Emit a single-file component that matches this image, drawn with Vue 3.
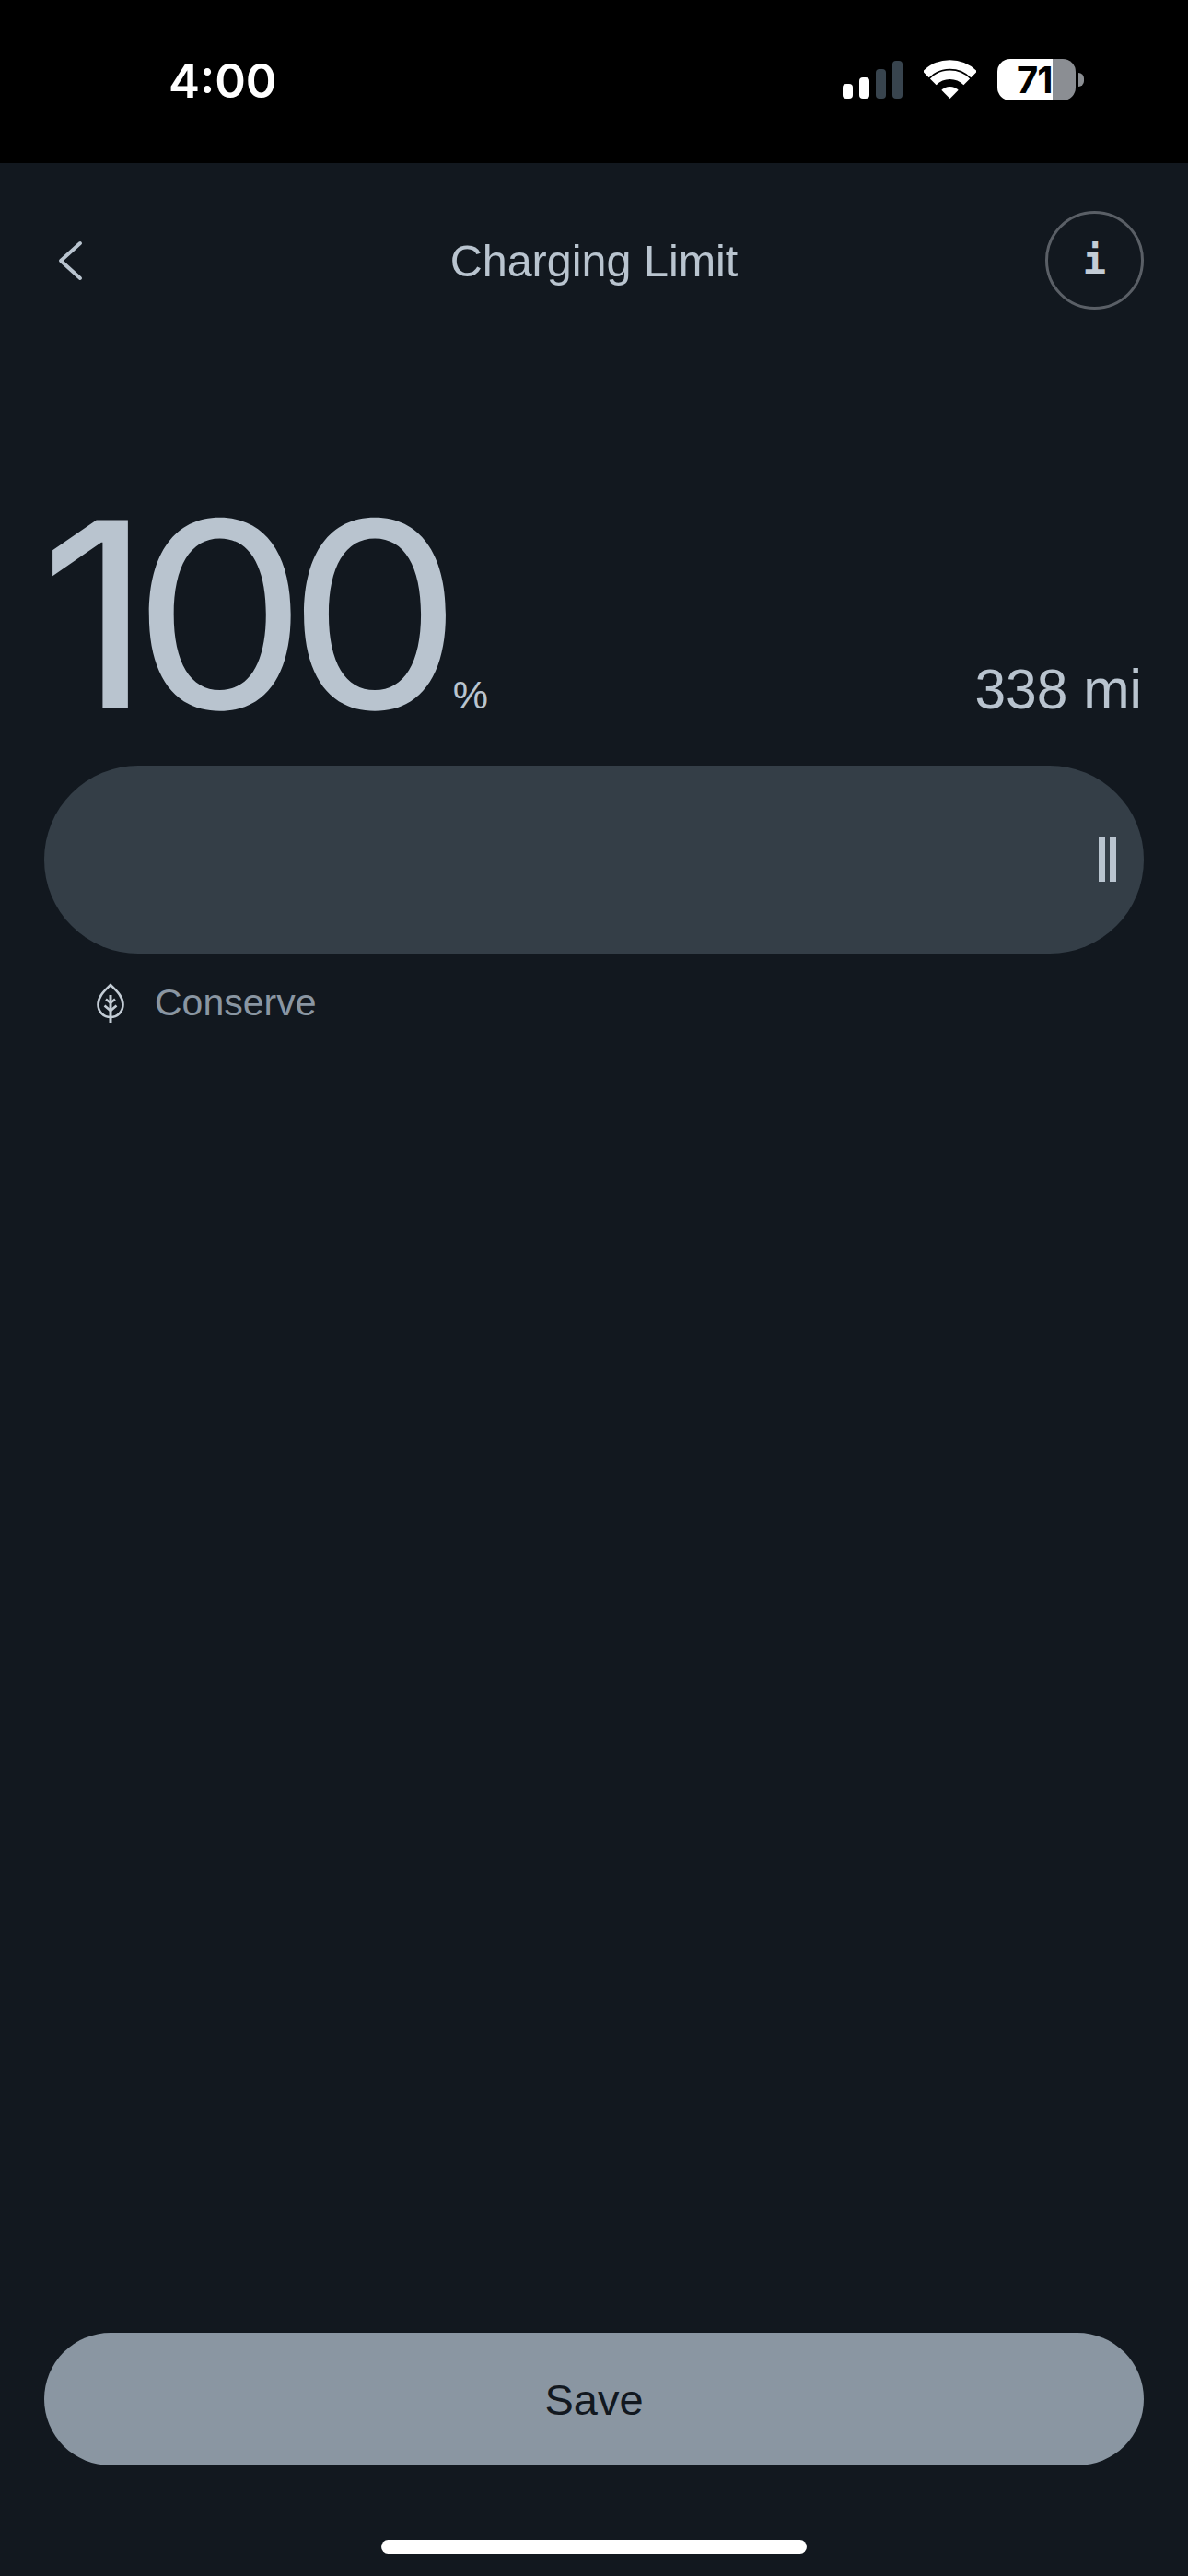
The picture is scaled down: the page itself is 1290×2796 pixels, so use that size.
<script setup>
const percent = 100;
const range = "338 mi";
</script>

<template>
  <div class="page">
    <div class="statusBar">
      <span class="time">4:00</span>
      <div class="statusIcons">
        <div class="signal">
          <i class="bar on b1"></i>
          <i class="bar on b2"></i>
          <i class="bar b3"></i>
          <i class="bar b4"></i>
        </div>
        <svg class="wifi" width="57" height="42" viewBox="0 0 57 42" fill="none">
          <path d="M2.3 15.8A37 37 0 0 1 54.7 15.8" stroke="#fff" stroke-width="9.5" />
          <path d="M10.3 23.8A25.7 25.7 0 0 1 46.7 23.8" stroke="#fff" stroke-width="9.5" />
          <path d="M28.5 42L19.3 32.8A13 13 0 0 1 37.7 32.8Z" fill="#fff" />
        </svg>
        <div class="battery">
          <div class="batteryBody"><span>71</span></div>
          <i class="batteryNub"></i>
        </div>
      </div>
    </div>

    <div class="nav">
      <button class="backBtn" aria-label="Back">
        <svg width="27" height="44" viewBox="0 0 27 44" fill="none">
          <path d="M24 3L3 22L24 41" stroke="#b9c4cf" stroke-width="4" stroke-linecap="round" stroke-linejoin="round" />
        </svg>
      </button>
      <h1 class="title">Charging Limit</h1>
      <button class="infoBtn" aria-label="Info">i</button>
    </div>

    <div class="readout">
      <span class="number">{{ percent }}</span>
      <span class="unit">%</span>
      <span class="range">{{ range }}</span>
    </div>

    <div class="track">
      <div class="handle"><i></i><i></i></div>
    </div>

    <div class="mode">
      <svg width="30" height="43" viewBox="0 0 30 43" fill="none" stroke="#c3ccd5" stroke-width="2.6">
        <path d="M15 2C9 8 1.5 14 1.5 23.5C1.5 31 7.5 37 15 37C22.5 37 28.5 31 28.5 23.5C28.5 14 21 8 15 2Z" stroke-linejoin="round" />
        <path d="M15 13V43" stroke-width="3" />
        <path d="M10 17.5L15 21.5L20 17.5M8.5 24.5L15 30L21.5 24.5" />
      </svg>
      <span class="modeLabel">Conserve</span>
    </div>

    <div class="spacer"></div>

    <button class="saveBtn">Save</button>
    <div class="homeArea"><div class="homeBar"></div></div>
  </div>
</template>

<style>
html,
body {
  margin: 0;
  background: #12181f;
}
</style>

<style scoped>
.page {
  width: 1290px;
  height: 2796px;
  display: flex;
  flex-direction: column;
  background: #12181f;
  color: #b9c4cf;
  font-family: "Liberation Sans", Arial, sans-serif;
  overflow: hidden;
}

.statusBar {
  height: 177px;
  flex: none;
  background: #000;
  display: flex;
  justify-content: space-between;
  padding: 0 113px 0 183px;
  box-sizing: border-box;
}

.time {
  font-family: Inter, sans-serif;
  font-weight: 600;
  font-size: 51px;
  line-height: 176px;
  color: #fff;
}

.statusIcons {
  display: flex;
  align-items: flex-start;
  padding-top: 65px;
}

.signal {
  display: flex;
  align-items: flex-end;
  gap: 7px;
  height: 42px;
  margin-right: 23px;
}

.bar {
  display: block;
  width: 11px;
  border-radius: 4px;
  background: #38444e;
}

.bar.on {
  background: #fff;
}

.b1 { height: 16px; }
.b2 { height: 23px; }
.b3 { height: 32px; }
.b4 { height: 41px; }

.battery {
  display: flex;
  align-items: center;
  margin-left: 23px;
  margin-top: -1px;
}

.batteryBody {
  width: 85px;
  height: 45px;
  border-radius: 14px;
  background: linear-gradient(to right, #fff 60px, #8b8e93 60px);
}

.batteryBody span {
  display: block;
  width: 60px;
  padding-left: 21px;
  box-sizing: border-box;
  font-family: Inter, sans-serif;
  font-weight: 700;
  font-size: 40px;
  line-height: 45px;
  letter-spacing: -1px;
  color: #000;
}

.batteryNub {
  display: block;
  width: 6px;
  height: 15px;
  margin-left: 3px;
  border-radius: 0 8px 8px 0;
  background: #8b8e93;
}

.nav {
  display: grid;
  grid-template-columns: 1fr auto 1fr;
  align-items: center;
  padding: 52px 48px 0;
}

.backBtn,
.infoBtn {
  padding: 0;
  background: none;
  cursor: pointer;
}

.backBtn {
  border: none;
  justify-self: start;
  display: flex;
  margin-left: 15px;
}

.title {
  margin: 0;
  font-weight: 400;
  font-size: 48.5px;
  line-height: 109px;
  height: 107px;
  color: #b9c4cf;
}

.infoBtn {
  justify-self: end;
  width: 107px;
  height: 107px;
  border: 3px solid #5a5f66;
  border-radius: 50%;
  color: #c3ccd5;
  font-family: "DejaVu Sans Mono", monospace;
  font-weight: 700;
  font-size: 42px;
}

.readout {
  display: flex;
  align-items: baseline;
  padding: 226px 50px 0 48px;
}

.number {
  font-family: Inter, sans-serif;
  font-weight: 420;
  font-size: 281px;
  line-height: 210px;
  letter-spacing: -20px;
  margin-left: -5px;
  transform: scaleX(1.07);
  transform-origin: left;
}

.unit {
  margin-left: 40px;
  font-size: 43px;
  line-height: 48px;
}

.range {
  margin-left: auto;
  font-size: 60.5px;
  line-height: 58px;
}

.track {
  flex: none;
  position: relative;
  height: 204px;
  margin: 53px 48px 0;
  border-radius: 102px;
  background: #343e47;
}

.handle {
  position: absolute;
  right: 30px;
  top: 78px;
  display: flex;
  gap: 5px;
}

.handle i {
  display: block;
  width: 7px;
  height: 48px;
  background: #b9c4cf;
}

.mode {
  display: flex;
  align-items: center;
  gap: 33px;
  padding: 29px 0 0 105px;
}

.modeLabel {
  font-size: 41px;
  line-height: 48px;
  color: #8a96a2;
}

.spacer {
  flex: 1;
}

.saveBtn {
  flex: none;
  height: 144px;
  margin: 0 48px;
  border: none;
  border-radius: 72px;
  background: #8a96a2;
  color: #12181f;
  font-family: inherit;
  font-size: 47px;
  cursor: pointer;
}

.homeArea {
  flex: none;
  height: 120px;
  display: flex;
  justify-content: center;
  padding-top: 81px;
  box-sizing: border-box;
}

.homeBar {
  width: 462px;
  height: 15px;
  border-radius: 8px;
  background: #fff;
}
</style>
